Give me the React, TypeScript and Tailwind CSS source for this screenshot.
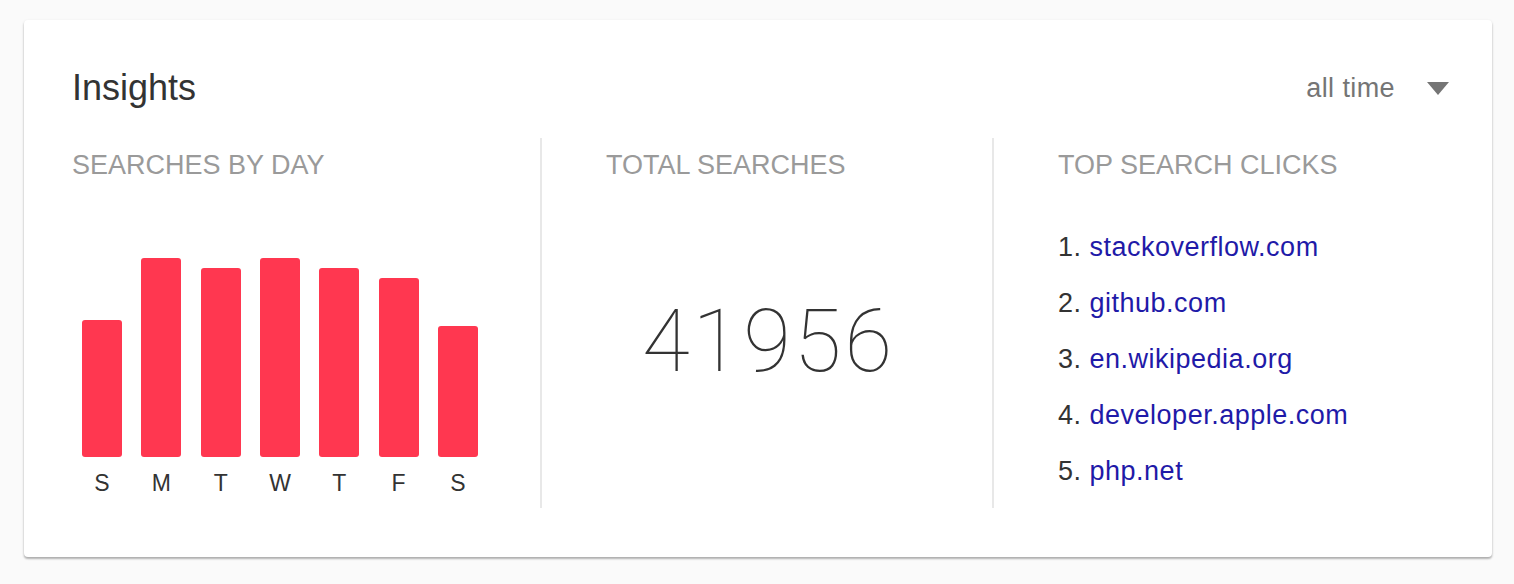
import React from "react";

const bars = [
  { d: "S", h: 137 },
  { d: "M", h: 199 },
  { d: "T", h: 189 },
  { d: "W", h: 199 },
  { d: "T", h: 189 },
  { d: "F", h: 179 },
  { d: "S", h: 131 },
];

const sites = [
  "stackoverflow.com",
  "github.com",
  "en.wikipedia.org",
  "developer.apple.com",
  "php.net",
];

export default function App() {
  return (
    <div
      className="min-h-[584px] w-full bg-[#fafafa] pl-[24px] pr-[22px] pt-[20px]"
      style={{ fontFamily: '"Liberation Sans", Arial, sans-serif' }}
    >
      <div className="h-[537px] rounded-[4px] bg-white pl-[48px] pr-[43px] pt-[50px] shadow-[0_1px_3px_rgba(0,0,0,0.12),0_2px_2px_rgba(0,0,0,0.24)]">
        <div className="mb-[32px] flex h-[36px] items-center justify-between">
          <div className="text-[36px] leading-[36px] text-[#333333]">Insights</div>
          <div className="flex items-center">
            <span className="text-[27px] leading-[27px] tracking-[0.4px] text-[#757575]">all time</span>
            <svg width="22" height="13" viewBox="0 0 22 13" className="ml-[32px]">
              <polygon points="0,0 22,0 11,13" fill="#757575" />
            </svg>
          </div>
        </div>

        <div className="grid h-[370px] grid-cols-[468px_452px_1fr]">
          <div className="pt-[14px]">
            <div className="text-[27px] leading-[27px] text-[#9a9a9a]">SEARCHES BY DAY</div>
            <div className="ml-[10px] mt-[79px] flex gap-[19.33px]">
              {bars.map((b, i) => (
                <div key={i} className="flex w-[40px] flex-col items-center">
                  <div className="flex h-[199px] w-full items-end">
                    <div
                      className="w-full rounded-[3px] bg-[#ff3750]"
                      style={{ height: b.h }}
                    />
                  </div>
                  <div className="mt-[15px] text-[23px] leading-[23px] text-[#333333]">{b.d}</div>
                </div>
              ))}
            </div>
          </div>

          <div className="border-l-2 border-[#e8e8e8] pt-[14px]">
            <div className="pl-[64px] text-[27px] leading-[27px] text-[#9a9a9a]">TOTAL SEARCHES</div>
            <div
              className="mt-[119px] pl-[3px] text-center text-[87px] leading-[87px] tracking-[3px] text-[#333333]"
              style={{ fontFamily: 'Roboto, "Liberation Sans", sans-serif', fontWeight: 100 }}
            >
              41956
            </div>
          </div>

          <div className="border-l-2 border-[#e8e8e8] pl-[64px] pt-[14px]">
            <div className="text-[27px] leading-[27px] text-[#9a9a9a]">TOP SEARCH CLICKS</div>
            <ol className="mt-[40px]">
              {sites.map((s, i) => (
                <li key={i} className="h-[56px] text-[27px] leading-[56px] tracking-[0.5px] text-[#333333]">
                  {i + 1}. <a className="text-[#1f1aa8]">{s}</a>
                </li>
              ))}
            </ol>
          </div>
        </div>
      </div>
    </div>
  );
}
